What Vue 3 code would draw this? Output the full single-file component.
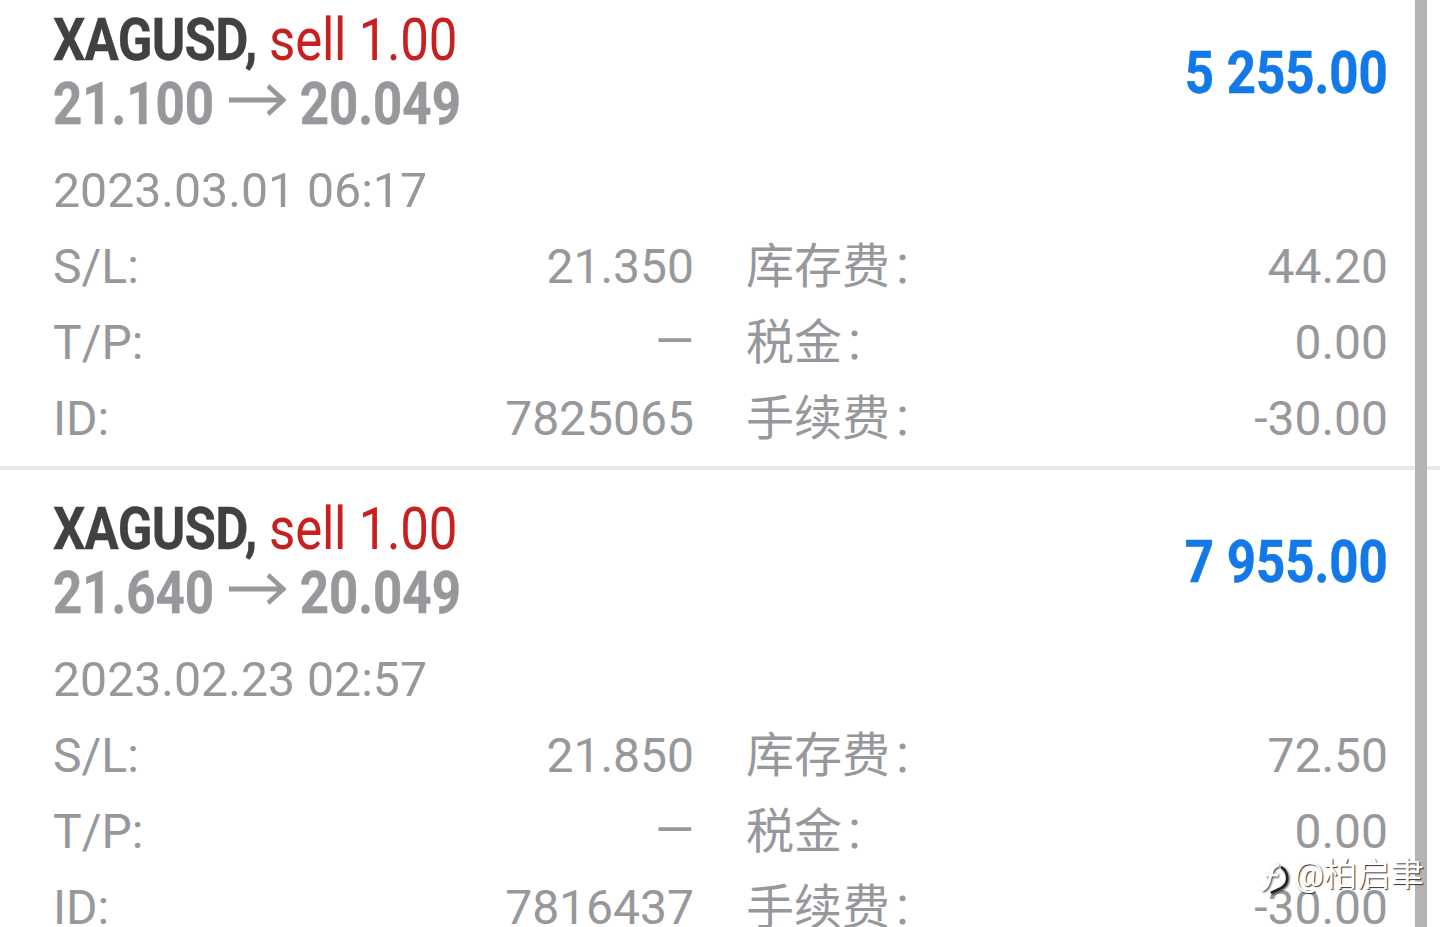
<script setup>
const trades = [
  { symbol: 'XAGUSD,', side: 'sell 1.00', open: '21.100', close: '20.049', profit: '5 255.00', date: '2023.03.01 06:17', sl: '21.350', id: '7825065', swap: '44.20', tax: '0.00', fee: '-30.00' },
  { symbol: 'XAGUSD,', side: 'sell 1.00', open: '21.640', close: '20.049', profit: '7 955.00', date: '2023.02.23 02:57', sl: '21.850', id: '7816437', swap: '72.50', tax: '0.00', fee: '-30.00' },
]
</script>

<template>
  <div class="screen">
    <div v-for="t in trades" :key="t.id" class="trade">
      <div class="head">
        <div class="squeeze">
          <div class="title"><b class="sym">{{ t.symbol }}</b> <span class="side">{{ t.side }}</span></div>
          <div class="prices">{{ t.open }} <svg class="arrow" viewBox="0 0 67 34" width="67" height="34"><path d="M0 17H64M46 3L64 17L46 31" fill="none" stroke="#97989b" stroke-width="5"/></svg> {{ t.close }}</div>
        </div>
        <div class="profit">{{ t.profit }}</div>
      </div>
      <div class="date">{{ t.date }}</div>
      <div class="grid">
        <div class="cell"><span>S/L:</span><span>{{ t.sl }}</span></div>
        <div class="cell"><span>库存费<i class="colon">:</i></span><span>{{ t.swap }}</span></div>
        <div class="cell"><span>T/P:</span><span class="dash">—</span></div>
        <div class="cell"><span>税金<i class="colon">:</i></span><span>{{ t.tax }}</span></div>
        <div class="cell"><span>ID:</span><span>{{ t.id }}</span></div>
        <div class="cell"><span>手续费<i class="colon">:</i></span><span>{{ t.fee }}</span></div>
      </div>
    </div>
    <div class="scrollbar"></div>
    <div class="mark">
      <svg class="logo" viewBox="0 0 30 32" width="30" height="32"><path d="M2 28C8 26 9 20 11 12C12 7 14 4 19 3M6 13H18" fill="none" stroke="#fff" stroke-width="3"/><path d="M21 5C28 9 29 19 24 24C20 28 14 28 11 31" fill="none" stroke="#222" stroke-width="2.5"/></svg>
      <span>@柏启聿</span>
    </div>
  </div>
</template>

<style scoped>
.screen {
  position: relative;
  height: 927px;
  overflow: hidden;
  background: #fff;
  font-family: Roboto, "Noto Sans CJK SC", sans-serif;
  color: #97989b;
}
.trade {
  padding: 27px 52px 9px 53px;
  border-bottom: 4px solid #e8e8e8;
}
.trade:first-child { padding-top: 8px; }
.head {
  display: flex;
  justify-content: space-between;
  align-items: center;
  height: 128px;
}
.squeeze { font-size: 60px; line-height: 64px; }
.title, .prices { white-space: nowrap; transform: scaleX(.85); transform-origin: left center; width: 480px; }
.sym { color: #404143; font-weight: 700; letter-spacing: -.9px; -webkit-text-stroke: .3px #404143; margin-right: 0; }
.side { color: #c8201f; font-weight: 400; letter-spacing: -.3px; }
.prices { font-weight: 700; -webkit-text-stroke: .5px #97989b; }
.arrow { vertical-align: 7px; margin: 0 1px 0 3px; }
.profit {
  font-size: 60px;
  font-weight: 700;
  color: #1479e8;
  white-space: nowrap;
  transform: scaleX(.85);
  transform-origin: right center;
  -webkit-text-stroke: .5px #1479e8;
}
.date {
  margin-top: 17px;
  font-size: 48.2px;
  line-height: 76px;
}
.grid {
  display: grid;
  grid-template-columns: 641px 1fr;
  column-gap: 52px;
}
.cell {
  display: flex;
  justify-content: space-between;
  height: 76px;
  line-height: 76px;
  font-size: 48px;
}
.colon { font-style: normal; font-size: 54px; line-height: 0; margin-left: 6px; }
.dash { font-size: 50px; line-height: 72px; }
.scrollbar {
  position: absolute;
  top: 0;
  bottom: 0;
  left: 1415px;
  width: 12px;
  background: #b3b3b3;
}
.mark {
  position: absolute;
  left: 1260px;
  top: 856px;
  display: flex;
  align-items: center;
  gap: 4px;
  color: #fff;
  font-size: 33.4px;
  line-height: 36px;
  text-shadow: 1px 1px 1px #333;
}
.logo { filter: drop-shadow(1px 1px 1px #333); margin-top: 6px; }
</style>
